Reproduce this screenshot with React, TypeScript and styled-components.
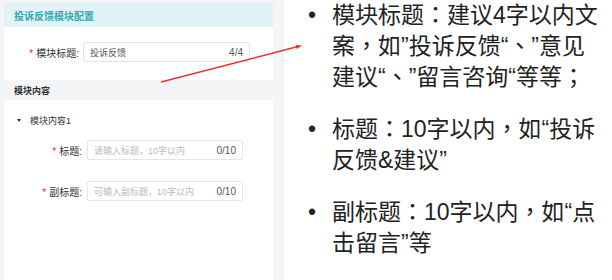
import React from "react";
import styled, { createGlobalStyle } from "styled-components";

const GlobalStyle = createGlobalStyle`
  html, body {
    margin: 0;
    padding: 0;
    background: #ffffff;
  }
  body {
    font-family: "Liberation Sans", "Noto Sans CJK SC", sans-serif;
    color: #333333;
    text-spacing-trim: space-all;
  }
`;

interface Field {
  id: string;
  label: string;
  value: string;
  placeholder: string;
  count: string;
}

const topField: Field = {
  id: "name",
  label: "模块标题:",
  value: "投诉反馈",
  placeholder: "",
  count: "4/4",
};

const itemFields: Field[] = [
  {
    id: "title",
    label: "标题:",
    value: "",
    placeholder: "请输入标题，10字以内",
    count: "0/10",
  },
  {
    id: "subtitle",
    label: "副标题:",
    value: "",
    placeholder: "可输入副标题，10字以内",
    count: "0/10",
  },
];

const notes = [
  "模块标题：建议4字以内文案，如”投诉反馈“、”意见建议“、”留言咨询“等等；",
  "标题：10字以内，如“投诉反馈&建议”",
  "副标题：10字以内，如“点击留言”等",
];

const App = () => {
  return (
    <Page>
      <GlobalStyle />
      <Sidebar>
        <Panel>
          <PanelHeader>投诉反馈模块配置</PanelHeader>
          <TopForm>
            <FormRow labelWidth={65} gap={4} inputWidth={167}>
              <Label>
                <Required>*</Required>
                {topField.label}
              </Label>
              <InputBox>
                <InputText>{topField.value}</InputText>
                <Counter>{topField.count}</Counter>
              </InputBox>
            </FormRow>
          </TopForm>
          <SectionBand>模块内容</SectionBand>
          <CollapseTitle>
            <Caret />
            模块内容1
          </CollapseTitle>
          <ItemForm>
            {itemFields.map((f) => (
              <FormRow key={f.id} labelWidth={68} gap={5} inputWidth={156}>
                <Label>
                  <Required>*</Required>
                  {f.label}
                </Label>
                <InputBox>
                  <InputText muted>{f.placeholder}</InputText>
                  <Counter>{f.count}</Counter>
                </InputBox>
              </FormRow>
            ))}
          </ItemForm>
        </Panel>
      </Sidebar>
      <Notes>
        {notes.map((n) => (
          <Note key={n}>
            <Bullet>•</Bullet>
            <NoteText>{n}</NoteText>
          </Note>
        ))}
      </Notes>
      <Arrow width="612" height="280" viewBox="0 0 612 280">
        <line
          x1="161"
          y1="82"
          x2="297"
          y2="46.8"
          stroke="#e5322d"
          strokeWidth="1.4"
        />
        <polygon points="302,45.5 296.8,49.1 295.6,44.9" fill="#e5322d" />
      </Arrow>
    </Page>
  );
};

const Page = styled.div`
  position: relative;
  display: flex;
  width: 612px;
  height: 280px;
  overflow: hidden;
`;

const Sidebar = styled.div`
  width: 284px;
  flex: none;
  box-sizing: border-box;
  padding: 3px 11px 0 4px;
  background: #f4f5f7;
`;

const Panel = styled.div`
  height: 100%;
  background: #ffffff;
  display: flex;
  flex-direction: column;
`;

const PanelHeader = styled.div`
  height: 24px;
  display: flex;
  align-items: center;
  padding-left: 10px;
  background: #e1f3f6;
  color: #35a5ae;
  font-size: 10px;
  font-weight: bold;
`;

const TopForm = styled.div`
  padding: 15px 0 18px;
`;

const FormRow = styled.div<{ labelWidth: number; gap: number; inputWidth: number }>`
  display: grid;
  grid-template-columns: ${(p) => p.labelWidth}px ${(p) => p.inputWidth}px;
  column-gap: ${(p) => p.gap}px;
  align-items: center;
  padding-left: 10px;
`;

const Label = styled.div`
  text-align: right;
  font-size: 10px;
  color: #333333;
  white-space: nowrap;
`;

const Required = styled.span`
  color: #e5322d;
  margin-right: 3px;
`;

const InputBox = styled.div`
  height: 20px;
  box-sizing: border-box;
  border: 1px solid #e4e5e7;
  border-radius: 2px;
  display: flex;
  align-items: center;
  justify-content: space-between;
  padding: 0 6px;
  font-size: 9px;
`;

const InputText = styled.span<{ muted?: boolean }>`
  color: ${(p) => (p.muted ? "#b8babd" : "#555555")};
  white-space: nowrap;
`;

const Counter = styled.span`
  color: #555555;
  font-size: 10px;
`;

const SectionBand = styled.div`
  height: 20px;
  margin-left: -4px;
  padding-left: 14px;
  display: flex;
  align-items: center;
  background: #f4f5f7;
  font-size: 9px;
  font-weight: bold;
  color: #333333;
`;

const CollapseTitle = styled.div`
  height: 40px;
  display: flex;
  align-items: center;
  padding-left: 13px;
  font-size: 9px;
  color: #333333;
`;

const Caret = styled.span`
  width: 0;
  height: 0;
  border-left: 2.5px solid transparent;
  border-right: 2.5px solid transparent;
  border-top: 3.5px solid #333333;
  margin-right: 9px;
`;

const ItemForm = styled.div`
  display: flex;
  flex-direction: column;
  gap: 21px;
`;

const Notes = styled.ul`
  flex: 1;
  margin: 0;
  padding: 0 7px 0 22px;
  list-style: none;
  display: flex;
  flex-direction: column;
  gap: 21px;
  font-family: "Liberation Sans", "Noto Sans CJK TC", sans-serif;
`;

const Note = styled.li`
  display: flex;
  font-size: 23px;
  line-height: 31px;
  color: #222222;
`;

const Bullet = styled.span`
  width: 26px;
  flex: none;
  padding-left: 2px;
  box-sizing: border-box;
`;

const NoteText = styled.span`
  flex: 1;
`;

const Arrow = styled.svg`
  position: absolute;
  left: 0;
  top: 0;
  pointer-events: none;
`;

export default App;
